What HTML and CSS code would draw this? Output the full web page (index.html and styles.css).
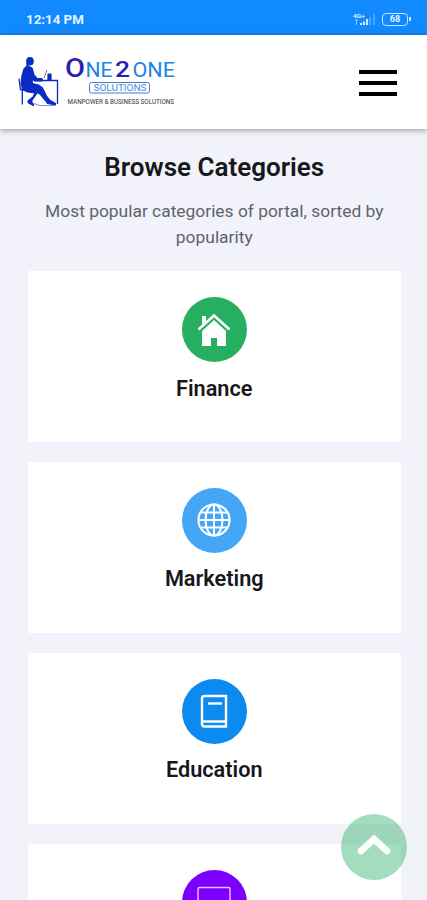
FILE: index.html
```html
<!DOCTYPE html>
<html lang="en">
<head>
    <meta charset="UTF-8">
    <meta name="viewport" content="width=device-width, initial-scale=1.0">
    <title>One2One Solutions</title>
    <link rel="stylesheet" href="styles.css">
</head>

<body>
    <div class="status-bar">
        <span class="clock">12:14 PM</span>
        <div class="status-icons">
            <svg width="23" height="15" viewBox="0 0 23 15">
                <text class="network" x="0" y="6" textLength="12" lengthAdjust="spacingAndGlyphs">4G+</text>
                <path d="M2 8h3M3.500 8v5" stroke="#8cc9ff" fill="none" />
                <path d="M8 13v-2M11 13V9.500M14 13V7" stroke="#d5ecff" stroke-width="2" />
                <path d="M17 13V5M21 13V2" stroke="#4aa8ff" stroke-width="2" />
            </svg>
            <div class="battery">68</div>
        </div>
    </div>

    <header class="header">
        <a class="logo">
            <svg width="160" height="54" viewBox="0 0 160 54">
                <!-- man at the desk -->
                <g fill="#0b2cc4" stroke="#0b2cc4" stroke-width="1.200" stroke-linejoin="round">
                    <ellipse cx="12" cy="6.300" rx="3.200" ry="3.600" />
                    <path d="M9 8l1 3 4 2 2 7 3 3.500 5 1v1.500l-7 0-3-2 .500 4.500 6 1.500 4 3 4 8 3 4 6 3.500v1.500l-8-1.500-2-3-5-6-3-2-5 7-1 2 2 3v1l-5-2.500-.500-2 5-4 2-4-7-1-5-2-2-6 1-8 2-7 3-3z" />
                    <path d="M30 19h3v6h-3zM19 23.500h5v1h-5z" />
                </g>
                <path d="M1 23.500L2.500 34.500H9M4.300 34v15.500" fill="none" stroke="#0b2cc4" stroke-width="1.300" />
                <path d="M16 25.500h23.500V49" fill="none" stroke="#0b2cc4" stroke-width="1.300" />
                <path d="M38 50.500H22l-6-2" fill="none" stroke="#8290dc" stroke-width="1" />
                <path d="M26 23l3-8" fill="none" stroke="#777" stroke-width="1" />

                <!-- wordmark -->
                <text class="word navy big" x="47" y="22" textLength="20" lengthAdjust="spacingAndGlyphs">O</text>
                <text class="word blue" x="67.500" y="22" textLength="27" lengthAdjust="spacingAndGlyphs">NE</text>
                <text class="word navy two" x="97" y="22" textLength="15" lengthAdjust="spacingAndGlyphs">2</text>
                <text class="word blue" x="114.500" y="22" textLength="42.500" lengthAdjust="spacingAndGlyphs">ONE</text>
                <rect x="71.500" y="27.500" width="60" height="10.500" rx="2" fill="none" stroke="#4a79c9" />
                <text class="solutions" x="75.500" y="36" textLength="53" lengthAdjust="spacingAndGlyphs">SOLUTIONS</text>
                <text class="tagline" x="49.500" y="48.500" textLength="106.500" lengthAdjust="spacingAndGlyphs">MANPOWER &amp; BUSINESS SOLUTIONS</text>
            </svg>
        </a>
        <button class="menu-button" aria-label="Menu">
            <span></span>
            <span></span>
            <span></span>
        </button>
    </header>

    <main class="categories">
        <h1>Browse Categories</h1>
        <p class="subtitle">Most popular categories of portal, sorted by popularity</p>

        <div class="card">
            <div class="icon green">
                <svg width="34" height="34" viewBox="0 0 34 34">
                    <path d="M5 3h4v5L5 12z" fill="#fff" />
                    <path d="M1.500 16.500L17 2.500l15.500 14" fill="none" stroke="#fff" stroke-width="2.600" />
                    <path d="M17 7l12 11v15h-9v-8h-6v8H5V18z" fill="#fff" />
                </svg>
            </div>
            <h2>Finance</h2>
        </div>

        <div class="card">
            <div class="icon sky">
                <svg width="34" height="34" viewBox="0 0 34 34" fill="none" stroke="#fff" stroke-width="2">
                    <circle cx="17" cy="17" r="15.600" />
                    <ellipse cx="17" cy="17" rx="8.500" ry="15.600" />
                    <path d="M17 1.500v31M1.500 17h31M4 9.500h26M4 24.500h26" />
                </svg>
            </div>
            <h2>Marketing</h2>
        </div>

        <div class="card">
            <div class="icon blue-bg">
                <svg width="28" height="34" viewBox="0 0 28 34" fill="none" stroke="#fff" stroke-width="2.400">
                    <path d="M26 33V2H4.500Q2 2 2 5v25q0 2.500 2.500 2.500H27" />
                    <path d="M3 27.500h23" />
                    <path d="M8 9.500h14" />
                </svg>
            </div>
            <h2>Education</h2>
        </div>

        <div class="card">
            <div class="icon purple">
                <svg width="34" height="34" viewBox="0 0 34 34" fill="none" stroke="#e3bfff" stroke-width="1.500">
                    <rect x="1" y="2.500" width="32" height="23" rx="1.500" />
                    <path d="M17 26v6M10 32h14" />
                </svg>
            </div>
        </div>
    </main>

    <a class="back-to-top" aria-label="Back to top">
        <svg width="36" height="24" viewBox="0 0 36 24">
            <path d="M5 19L18 7l13 12" fill="none" stroke="#fff" stroke-width="6.500" stroke-linecap="round" />
        </svg>
    </a>
</body>
</html>
```
FILE: styles.css
```css
* {
    box-sizing: border-box;
}

body {
    margin: 0;
    height: 100vh;
    overflow: hidden;
    background-color: #f1f2fa;
    color: #17181b;
    font-family: Roboto, sans-serif;
}

.status-bar {
    display: flex;
    justify-content: space-between;
    align-items: center;
    height: 35px;
    padding: 4px 17px 0 26px;
    background-color: #118aff;
    color: #e4f2ff;
}

.clock {
    font-size: 13.3px;
    font-weight: 700;
}

.status-icons {
    display: flex;
    align-items: center;
    gap: 6px;
}

.network {
    font-size: 6px;
    font-weight: 700;
    fill: #e4f2ff;
}

.battery {
    position: relative;
    width: 26px;
    height: 13px;
    margin-right: 2px;
    border: 1.5px solid #c9e5ff;
    border-radius: 4px;
    font-size: 9px;
    font-weight: 700;
    line-height: 10px;
    text-align: center;
}

.battery::after {
    content: "";
    position: absolute;
    top: 3px;
    right: -4px;
    width: 2px;
    height: 4px;
    background-color: #c9e5ff;
}

.header {
    position: relative;
    display: flex;
    justify-content: space-between;
    align-items: center;
    height: 94px;
    padding: 0 30px 0 18px;
    background-color: #fff;
    box-shadow: 0 1px 6px rgba(0, 0, 0, 0.4);
}

.logo svg {
    display: block;
    overflow: visible;
}

.word {
    font-family: Roboto, sans-serif;
    font-size: 19.5px;
    font-weight: 400;
}

.blue {
    fill: #1c83e6;
}

.navy {
    fill: #2822b4;
    font-weight: 500;
}

.big {
    font-size: 25px;
}

.two {
    font-size: 22px;
}

.solutions {
    font-size: 9px;
    fill: #3f8fdc;
}

.tagline {
    font-size: 6.5px;
    fill: #333;
}

.menu-button {
    display: flex;
    flex-direction: column;
    gap: 7px;
    padding: 1px 0 0;
    border: none;
    background: none;
    cursor: pointer;
}

.menu-button span {
    width: 38px;
    height: 4px;
    background-color: #000;
}

.categories {
    padding: 22px 26px 0 27.5px;
    text-align: center;
}

h1 {
    margin: 0;
    font-size: 26px;
    font-weight: 600;
    line-height: 32px;
}

.subtitle {
    margin: 15px 0 21px;
    color: #60636c;
    font-size: 17.4px;
    line-height: 26px;
}

.card {
    height: 171.4px;
    margin-bottom: 19.6px;
    padding-top: 26px;
    background-color: #fff;
}

.icon {
    display: flex;
    justify-content: center;
    align-items: center;
    width: 65px;
    height: 65px;
    margin: 0 auto;
    border-radius: 50%;
}

.green {
    background-color: #26ae61;
}

.sky {
    background-color: #45a6f5;
}

.blue-bg {
    background-color: #0d8af0;
}

.purple {
    background-color: #7d00ff;
}

h2 {
    margin: 13.5px 0 0;
    font-size: 21.7px;
    font-weight: 600;
    line-height: 26px;
}

.back-to-top {
    position: fixed;
    right: 20px;
    bottom: 20px;
    display: flex;
    justify-content: center;
    align-items: center;
    width: 66px;
    height: 66px;
    padding-bottom: 6px;
    border-radius: 50%;
    background-color: rgba(38, 174, 97, 0.42);
}
```
